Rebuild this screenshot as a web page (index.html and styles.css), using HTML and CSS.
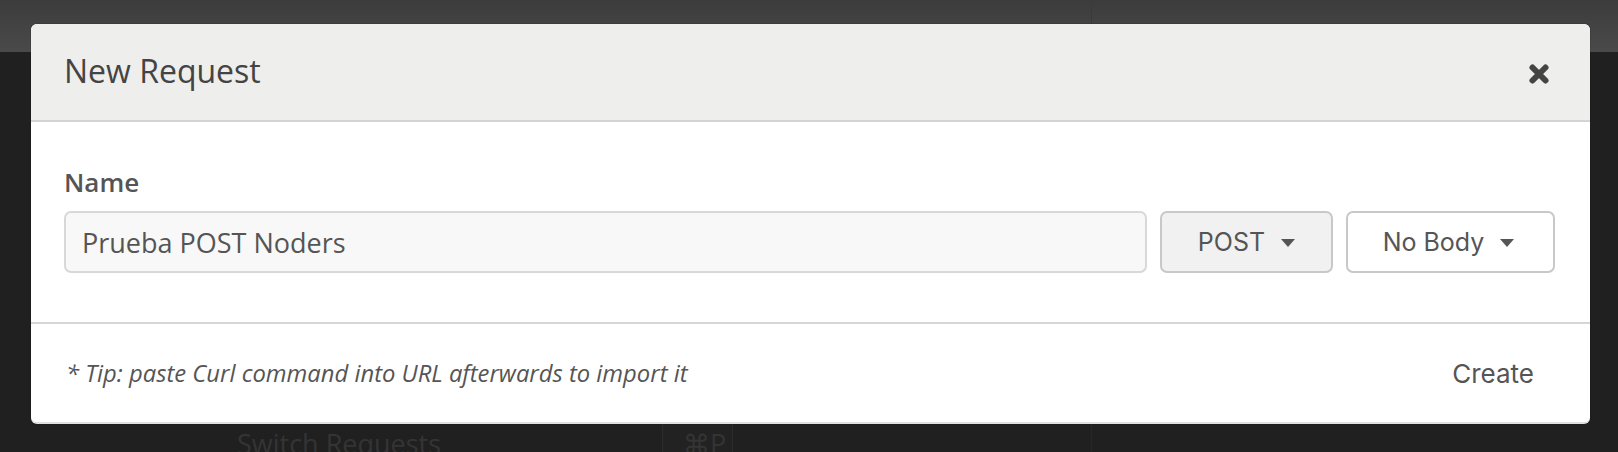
FILE: index.html
```html
<!DOCTYPE html>
<html lang="en">
<head>
<meta charset="utf-8">
<title>New Request</title>
<link rel="stylesheet" href="styles.css">
</head>
<body>
<div class="app">
  <header class="topbar">
    <div class="pane-left"></div>
    <div class="pane-right"></div>
  </header>
  <main class="workspace">
    <div class="pane-left">
      <div class="hints">
        <div class="hint">
          <span class="hint-label">Switch Requests</span>
          <span class="hint-key">⌘P</span>
        </div>
      </div>
    </div>
    <div class="pane-right"></div>
  </main>
</div>

<div class="modal">
  <div class="modal-header">
    <h1 class="modal-title">New Request</h1>
    <button class="modal-close" type="button" aria-label="Close">
      <svg width="22" height="22" viewBox="0 0 22 22"><path d="M4.5 4.5 L17.5 17.5 M17.5 4.5 L4.5 17.5" stroke="#444" stroke-width="6" stroke-linecap="round" fill="none"/></svg>
    </button>
  </div>
  <div class="modal-body">
    <label class="field-label">Name</label>
    <div class="field-row">
      <div class="text-input">Prueba POST Noders</div>
      <button class="dropdown-btn method-btn" type="button">POST <span class="caret"></span></button>
      <button class="dropdown-btn body-btn" type="button">No Body <span class="caret"></span></button>
    </div>
  </div>
  <div class="modal-footer">
    <span class="tip">* Tip: paste Curl command into URL afterwards to import it</span>
    <button class="create-btn" type="button">Create</button>
  </div>
</div>
</body>
</html>
```

FILE: styles.css
```css
* { box-sizing: border-box; }

html, body {
  margin: 0;
  padding: 0;
}

body {
  width: 1618px;
  height: 452px;
  overflow: hidden;
  background: #202020;
  font-family: "Open Sans", "Noto Sans", sans-serif;
  position: relative;
}

.app {
  display: flex;
  flex-direction: column;
  height: 100%;
}

.topbar {
  flex: none;
  height: 52px;
  display: flex;
  background: linear-gradient(to bottom, #3c3c3c, #4a4a4a);
}

.topbar .pane-left {
  width: 1092px;
  border-right: 1px solid #3a3a3a;
}

.topbar .pane-right {
  flex: 1;
}

.workspace {
  flex: 1;
  min-height: 0;
  display: flex;
}

.workspace .pane-left {
  width: 1092px;
  border-right: 1px solid #262626;
}

.workspace .pane-right { flex: 1; }

.hints {
  padding-top: 364px;
  padding-left: 237px;
}

.hint {
  display: flex;
  align-items: stretch;
}

.hint-label {
  width: 425px;
  padding: 10px 0;
  font-size: 27px;
  line-height: 36px;
  color: #343434;
  white-space: nowrap;
}

.hint-key {
  width: 71px;
  padding: 10px 0 10px 20px;
  font-size: 27px;
  line-height: 36px;
  color: #343434;
  background: #222;
  border-left: 1px solid #2c2c2c;
  border-right: 1px solid #2c2c2c;
}

/* Modal */
.modal {
  position: absolute;
  left: 31px;
  top: 24px;
  width: 1559px;
  height: 400px;
  background: #fff;
  border-radius: 6px;
  overflow: hidden;
  display: flex;
  flex-direction: column;
  box-shadow: 0 0 0 1px rgba(0, 0, 0, 0.08);
  border-bottom: 2px solid #e0e0e0;
}

.modal-header {
  height: 98px;
  flex: none;
  display: flex;
  align-items: center;
  justify-content: space-between;
  padding: 0 40px 2px 33px;
  background: #eeeeed;
  border-bottom: 2px solid #d4d4d4;
}

.modal-title {
  margin: 0;
  font-size: 32px;
  font-weight: 400;
  color: #444;
  line-height: 40px;
}

.modal-close {
  border: 0;
  padding: 0;
  margin-top: 6px;
  background: transparent;
  width: 22px;
  height: 22px;
  display: flex;
}

.modal-body {
  flex: none;
  height: 202px;
  padding: 42px 35px 0 33px;
  border-bottom: 2px solid #d6d6d6;
}

.field-label {
  display: block;
  font-size: 26px;
  line-height: 36px;
  font-weight: 600;
  color: #555;
}

.field-row {
  margin-top: 11px;
  display: flex;
  gap: 13px;
}

.text-input {
  flex: 1;
  height: 62px;
  display: flex;
  align-items: center;
  padding-left: 16px;
  border: 2px solid #d8d8d8;
  border-radius: 7px;
  background: #f8f8f8;
  font-size: 27px;
  color: #555;
}

.dropdown-btn {
  flex: none;
  height: 62px;
  display: flex;
  align-items: center;
  justify-content: center;
  gap: 16px;
  border: 2px solid #c8c8c8;
  border-radius: 7px;
  font-family: Inter, Roboto, "Liberation Sans", sans-serif;
  font-size: 25px;
  color: #555;
  padding: 0;
  white-space: nowrap;
}

.method-btn { background: #f1f1f1; width: 173px; }
.body-btn { background: #fff; width: 209px; padding-right: 4px; }

.caret {
  width: 0;
  height: 0;
  border-left: 7.5px solid transparent;
  border-right: 7.5px solid transparent;
  border-top: 8px solid #555;
  margin-top: 2px;
}

.modal-footer {
  flex: 1;
  display: flex;
  align-items: center;
  justify-content: space-between;
  padding: 0 56px 0 35px;
}

.tip {
  font-style: italic;
  font-size: 23.8px;
  color: #555;
}

.create-btn {
  border: 0;
  padding: 0;
  background: transparent;
  font-family: Inter, Roboto, "Liberation Sans", sans-serif;
  font-size: 26px;
  color: #555;
}
```
